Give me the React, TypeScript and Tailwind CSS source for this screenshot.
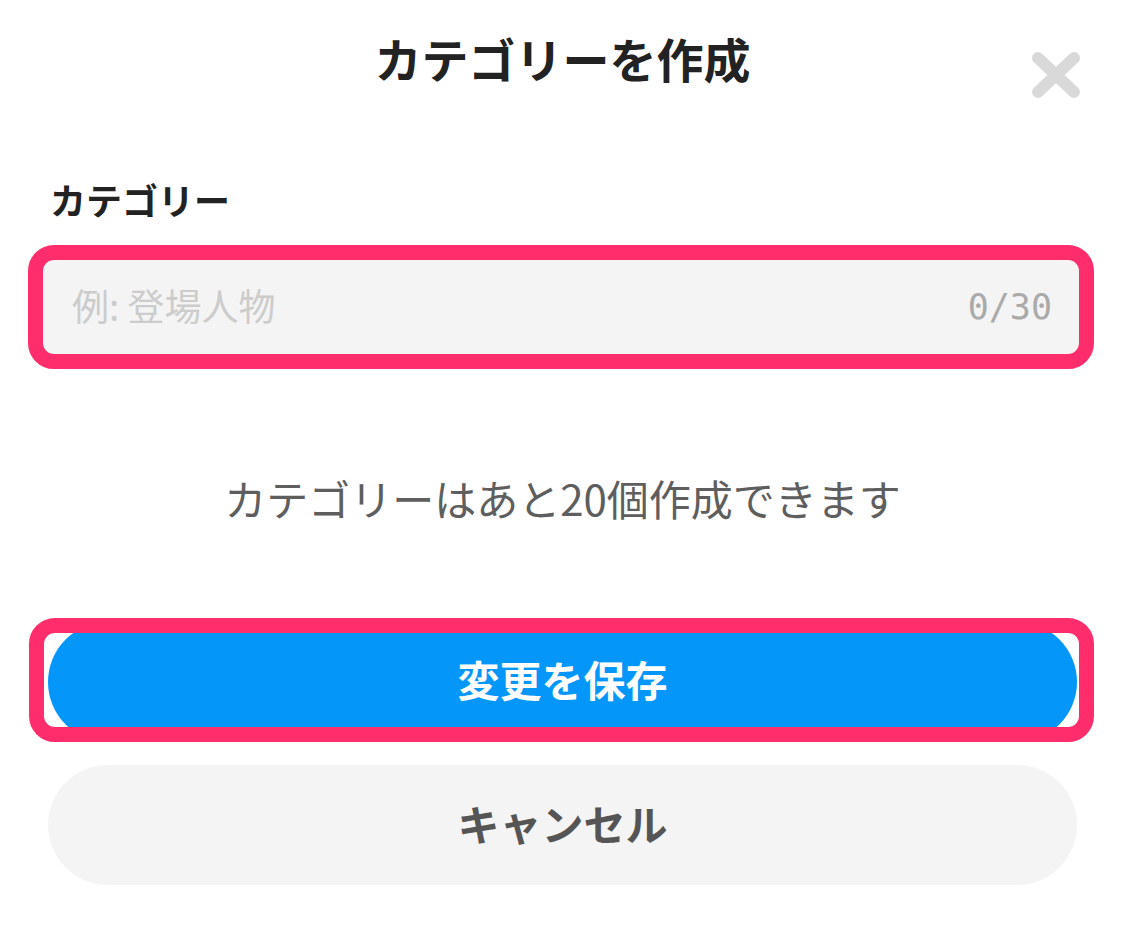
import React from "react";

const CloseIcon: React.FC = () => (
    <svg width="48" height="46" viewBox="0 0 48 46" fill="none">
        <path d="M6 6L42 40M42 6L6 40" stroke="#d9d9d9" strokeWidth="12" strokeLinecap="round" />
    </svg>
);

const App: React.FC = () => {
    return (
        <div className="relative w-[1125px] min-h-[934px] bg-white font-['Noto_Sans_CJK_JP',sans-serif]">
            {/* header */}
            <div className="relative h-[114px] flex items-center justify-center">
                <h1 className="text-[47px] leading-none font-bold text-[#222222]">カテゴリーを作成</h1>
                <button className="absolute left-[1032px] top-[52px]">
                    <CloseIcon />
                </button>
            </div>

            <div className="mt-[60px] px-[50px] text-[36px] leading-[50px] font-bold text-[#222222]">
                カテゴリー
            </div>

            {/* input with highlight frame */}
            <div className="mt-[21px] ml-[28px] mr-[31px] h-[124px] border-[15px] border-[#ff2d6b] rounded-[26px] bg-[#f4f4f4] flex items-center justify-between pl-[29px] pr-[27px]">
                <span className="text-[37px] text-[#cccccc] pb-[2px]">例: 登場人物</span>
                <span className="font-['DejaVu_Sans_Mono',monospace] text-[35px] text-[#aaaaaa]">0/30</span>
            </div>

            <p className="mt-[101px] text-center text-[42px] leading-[56px] text-[#5e5e5e]">
                カテゴリーはあと20個作成できます
            </p>

            {/* save button with highlight frame */}
            <div className="relative mt-[96px] mx-[48px] h-[120px]">
                <button className="w-full h-full rounded-full bg-[#0497f9] text-white text-[42px] font-bold pb-[8px]">
                    変更を保存
                </button>
                <div className="absolute pointer-events-none -left-[19px] -right-[17px] -top-[4px] bottom-0 border-[15px] border-[#ff2d6b] rounded-[26px]" />
            </div>

            <div className="mt-[23px] mx-[48px] h-[120px]">
                <button className="w-full h-full rounded-full bg-[#f4f4f4] text-[#555555] text-[42px] font-bold pb-[6px]">
                    キャンセル
                </button>
            </div>
        </div>
    );
};

export default App;
